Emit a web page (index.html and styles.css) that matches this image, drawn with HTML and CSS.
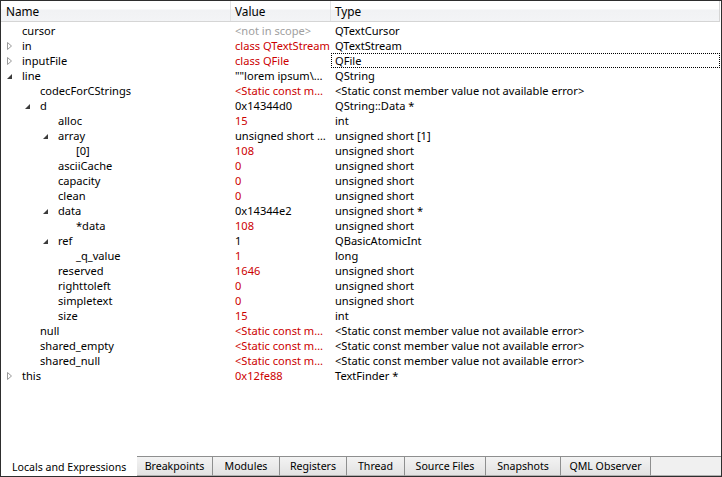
FILE: index.html
```html
<!DOCTYPE html>
<html>
<head>
<meta charset="utf-8">
<link rel="stylesheet" href="styles.css">
</head>
<body>
<div class="window">
  <div class="header">
    <div class="hcell c1">Name</div>
    <div class="hcell c2">Value</div>
    <div class="hcell c3">Type</div>
  </div>
  <div class="tree">
    <div class="row"><div class="name l0"><span class="tw"></span>cursor</div><div class="val gray">&lt;not in scope&gt;</div><div class="type">QTextCursor</div></div>
    <div class="row"><div class="name l0"><span class="tw"><svg width="7" height="10" viewBox="0 0 7 10"><path d="M1.5 1.5 L5.5 5 L1.5 8.5 Z" fill="none" stroke="#9a9a9a" stroke-width="1"/></svg></span>in</div><div class="val red">class QTextStream</div><div class="type">QTextStream</div></div>
    <div class="row"><div class="name l0"><span class="tw"><svg width="7" height="10" viewBox="0 0 7 10"><path d="M1.5 1.5 L5.5 5 L1.5 8.5 Z" fill="none" stroke="#9a9a9a" stroke-width="1"/></svg></span>inputFile</div><div class="val red">class QFile</div><div class="type focus">QFile</div></div>
    <div class="row"><div class="name l0"><span class="tw"><svg width="7" height="10" viewBox="0 0 7 10"><path d="M6 3 L6 8 L1 8 Z" fill="#3c3c3c"/></svg></span>line</div><div class="val">""lorem ipsum\…</div><div class="type">QString</div></div>
    <div class="row"><div class="name l1"><span class="tw"></span>codecForCStrings</div><div class="val red">&lt;Static const m…</div><div class="type">&lt;Static const member value not available error&gt;</div></div>
    <div class="row"><div class="name l1"><span class="tw"><svg width="7" height="10" viewBox="0 0 7 10"><path d="M6 3 L6 8 L1 8 Z" fill="#3c3c3c"/></svg></span>d</div><div class="val">0x14344d0</div><div class="type">QString::Data *</div></div>
    <div class="row"><div class="name l2"><span class="tw"></span>alloc</div><div class="val red">15</div><div class="type">int</div></div>
    <div class="row"><div class="name l2"><span class="tw"><svg width="7" height="10" viewBox="0 0 7 10"><path d="M6 3 L6 8 L1 8 Z" fill="#3c3c3c"/></svg></span>array</div><div class="val">unsigned short …</div><div class="type">unsigned short [1]</div></div>
    <div class="row"><div class="name l3"><span class="tw"></span>[0]</div><div class="val red">108</div><div class="type">unsigned short</div></div>
    <div class="row"><div class="name l2"><span class="tw"></span>asciiCache</div><div class="val red">0</div><div class="type">unsigned short</div></div>
    <div class="row"><div class="name l2"><span class="tw"></span>capacity</div><div class="val red">0</div><div class="type">unsigned short</div></div>
    <div class="row"><div class="name l2"><span class="tw"></span>clean</div><div class="val red">0</div><div class="type">unsigned short</div></div>
    <div class="row"><div class="name l2"><span class="tw"><svg width="7" height="10" viewBox="0 0 7 10"><path d="M6 3 L6 8 L1 8 Z" fill="#3c3c3c"/></svg></span>data</div><div class="val">0x14344e2</div><div class="type">unsigned short *</div></div>
    <div class="row"><div class="name l3"><span class="tw"></span>*data</div><div class="val red">108</div><div class="type">unsigned short</div></div>
    <div class="row"><div class="name l2"><span class="tw"><svg width="7" height="10" viewBox="0 0 7 10"><path d="M6 3 L6 8 L1 8 Z" fill="#3c3c3c"/></svg></span>ref</div><div class="val">1</div><div class="type">QBasicAtomicInt</div></div>
    <div class="row"><div class="name l3"><span class="tw"></span>_q_value</div><div class="val red">1</div><div class="type">long</div></div>
    <div class="row"><div class="name l2"><span class="tw"></span>reserved</div><div class="val red">1646</div><div class="type">unsigned short</div></div>
    <div class="row"><div class="name l2"><span class="tw"></span>righttoleft</div><div class="val red">0</div><div class="type">unsigned short</div></div>
    <div class="row"><div class="name l2"><span class="tw"></span>simpletext</div><div class="val red">0</div><div class="type">unsigned short</div></div>
    <div class="row"><div class="name l2"><span class="tw"></span>size</div><div class="val red">15</div><div class="type">int</div></div>
    <div class="row"><div class="name l1"><span class="tw"></span>null</div><div class="val red">&lt;Static const m…</div><div class="type">&lt;Static const member value not available error&gt;</div></div>
    <div class="row"><div class="name l1"><span class="tw"></span>shared_empty</div><div class="val red">&lt;Static const m…</div><div class="type">&lt;Static const member value not available error&gt;</div></div>
    <div class="row"><div class="name l1"><span class="tw"></span>shared_null</div><div class="val red">&lt;Static const m…</div><div class="type">&lt;Static const member value not available error&gt;</div></div>
    <div class="row"><div class="name l0"><span class="tw"><svg width="7" height="10" viewBox="0 0 7 10"><path d="M1.5 1.5 L5.5 5 L1.5 8.5 Z" fill="none" stroke="#9a9a9a" stroke-width="1"/></svg></span>this</div><div class="val red">0x12fe88</div><div class="type">TextFinder *</div></div>
  </div>
  <div class="tabs">
    <div class="tab active">Locals and Expressions</div>
    <div class="tab t-bp">Breakpoints</div>
    <div class="tab t-mod">Modules</div>
    <div class="tab t-reg">Registers</div>
    <div class="tab t-thr">Thread</div>
    <div class="tab t-src">Source Files</div>
    <div class="tab t-snap">Snapshots</div>
    <div class="tab t-qml">QML Observer</div>
    <div class="tabfill"></div>
  </div>
</div>
</body>
</html>
```

FILE: styles.css
```css
html, body {
  margin: 0;
  padding: 0;
  background: #ffffff;
}
.window {
  width: 722px;
  height: 477px;
  box-sizing: border-box;
  border: 1px solid #2e2e2e;
  display: flex;
  flex-direction: column;
  font-family: "Noto Sans", "DejaVu Sans", sans-serif;
  font-size: 11.1px;
  color: #000;
  background: #fff;
}
.header {
  display: grid;
  grid-template-columns: 230px 100px 1fr;
  height: 21px;
  box-sizing: border-box;
  background: linear-gradient(#ffffff 0, #ffffff 40%, #f1f2f4 45%, #f3f4f6 100%);
  border-bottom: 1px solid #d5d5d5;
  margin-right: 1px;
}
.hcell {
  display: flex;
  align-items: center;
  padding-left: 5px;
  border-right: 1px solid #e3e4e6;
  font-size: 11.8px;
  white-space: nowrap;
}
.hcell.c2, .hcell.c3 { padding-left: 4px; }
.hcell.c3 { border-right: 1px solid #d5d5d5; }
.tree {
  flex: 1;
  padding-top: 1px;
}
.row {
  display: grid;
  grid-template-columns: 230px 100px 1fr;
  height: 15px;
  line-height: 15px;
  white-space: nowrap;
}
.name {
  display: flex;
  align-items: center;
}
.tw {
  width: 16px;
  height: 15px;
  display: inline-flex;
  align-items: center;
  flex: none;
}
.l0 { padding-left: 5px; }
.l1 { padding-left: 23px; }
.l2 { padding-left: 41px; }
.l3 { padding-left: 59px; }
.val {
  padding-left: 4px;
  overflow: hidden;
}
.type {
  padding-left: 4px;
}
.red { color: #cc0000; }
.gray { color: #a0a0a0; }
.focus {
  outline: 1px dotted #000;
  outline-offset: -1px;
  margin-right: 1px;
}
.tabs {
  display: flex;
  height: 22px;
  box-sizing: border-box;
  align-items: flex-end;
}
.tab {
  height: 20px;
  box-sizing: border-box;
  display: flex;
  align-items: center;
  justify-content: center;
  flex: none;
  font-size: 10.6px;
  white-space: nowrap;
  background: linear-gradient(#f3f3f3, #e2e2e2);
  border: 1px solid #8e8f8f;
  border-left: none;
  border-bottom: 1px solid #b0b0b0;
}
.tab.active {
  width: 136px;
  height: 22px;
  background: #ffffff;
  border: none;
  justify-content: flex-start;
  padding: 3px 0 0 11px;
}
.t-bp { width: 76px; }
.t-mod { width: 67px; }
.t-reg { width: 67px; }
.t-thr { width: 58px; }
.t-src { width: 81px; }
.t-snap { width: 75px; }
.t-qml { width: 90px; }
.tabfill {
  flex: 1;
  height: 20px;
  box-sizing: border-box;
  background: #f0f0f0;
  border-top: 1px solid #8e8f8f;
  border-bottom: 1px solid #b0b0b0;
}
```
